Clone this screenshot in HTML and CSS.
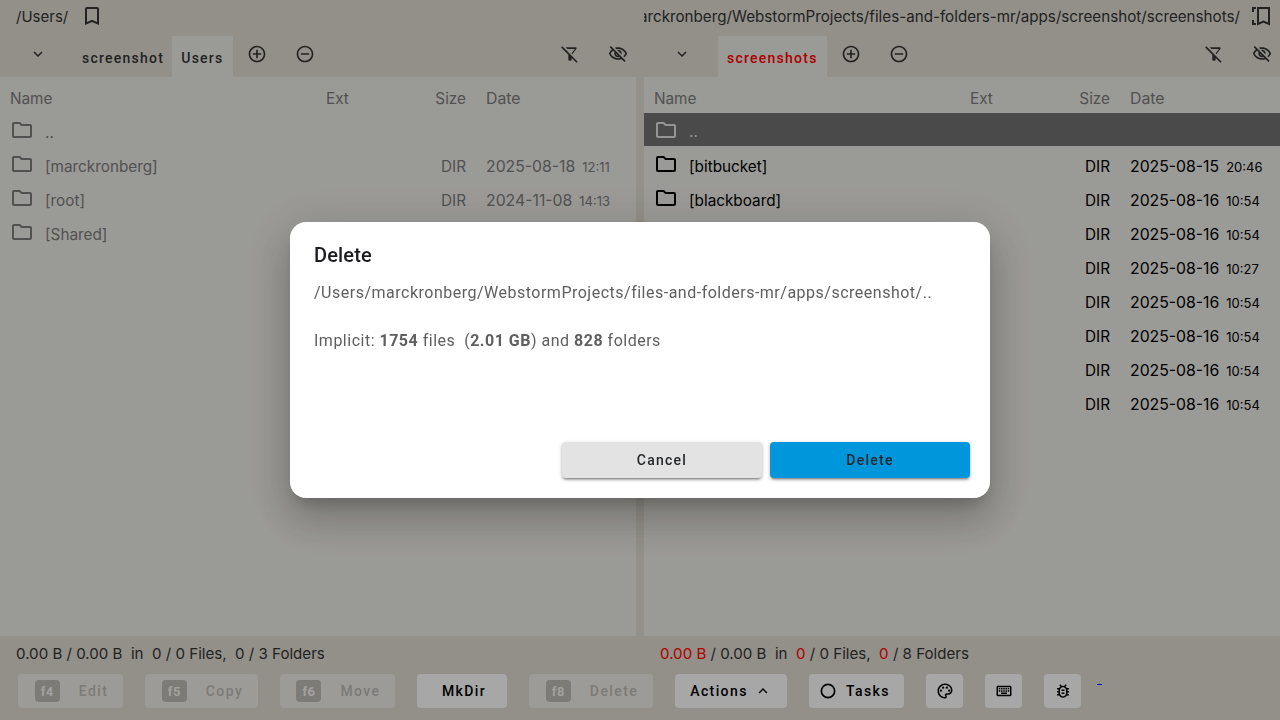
FILE: index.html
```html
<!DOCTYPE html>
<html lang="en">
<head>
  <meta charset="UTF-8" />
  <title>Files and Folders</title>
  <link rel="stylesheet" href="styles.css">
</head>
<body>
  <div class="app">
    <div class="panes">
      <section class="pane">
        <div class="path-bar">
          <span class="path">/Users/</span>
          <button class="icon-btn bookmark"><svg viewBox="0 0 24 24" width="24" height="24"><path d="M17 3H7c-1.1 0-1.99.9-1.99 2L5 21l7-3 7 3V5c0-1.1-.9-2-2-2zm0 15l-5-2.18L7 18V5h10v13z"/></svg></button>
        </div>
        <div class="tab-bar">
          <span class="chevron"><svg viewBox="0 0 24 24" width="18" height="18"><path d="M16.59 8.59 12 13.17 7.41 8.59 6 10l6 6 6-6z"/></svg></span>
          <span class="tab">screenshot</span>
          <span class="tab tab-on">Users</span>
          <span class="tab-action first"><svg viewBox="0 0 24 24" width="20" height="20"><path d="M13 7h-2v4H7v2h4v4h2v-4h4v-2h-4V7zm-1-5C6.48 2 2 6.48 2 12s4.48 10 10 10 10-4.48 10-10S17.52 2 12 2zm0 18c-4.41 0-8-3.59-8-8s3.59-8 8-8 8 3.59 8 8-3.59 8-8 8z"/></svg></span>
          <span class="tab-action"><svg viewBox="0 0 24 24" width="20" height="20"><path d="M7 11v2h10v-2H7zm5-9C6.48 2 2 6.48 2 12s4.48 10 10 10 10-4.48 10-10S17.52 2 12 2zm0 18c-4.41 0-8-3.59-8-8s3.59-8 8-8 8 3.59 8 8-3.59 8-8 8z"/></svg></span>
          <span class="tab-tools">
            <svg viewBox="0 0 24 24" width="20" height="20"><path d="M19.79 5.61C20.3 4.95 19.83 4 19 4H6.83l2 2h9.13l-4.15 5.3 1 1zM2.81 2.81 1.39 4.22 10 13v6c0 .55.45 1 1 1h2c.55 0 1-.45 1-1v-2.17l5.78 5.78 1.41-1.41L2.81 2.81z"/></svg>
            <svg viewBox="0 0 24 24" width="20" height="20"><path d="M12 6c3.79 0 7.17 2.13 8.82 5.5-.59 1.22-1.42 2.27-2.41 3.12l1.41 1.41c1.39-1.23 2.49-2.77 3.18-4.53C21.27 7.11 17 4 12 4c-1.27 0-2.49.2-3.64.57l1.65 1.65C10.66 6.09 11.32 6 12 6zm-1.07 1.14L13 9.21c.57.25 1.03.71 1.28 1.28l2.07 2.07c.08-.34.14-.7.14-1.07C16.5 9.01 14.48 7 12 7c-.37 0-.72.05-1.07.14zM2.01 3.87l2.68 2.68C3.06 7.83 1.77 9.53 1 11.5 2.73 15.89 7 19 12 19c1.52 0 2.98-.29 4.32-.82l3.42 3.42 1.41-1.41L3.42 2.45 2.01 3.87zm7.5 7.5l2.61 2.61c-.04.01-.08.02-.12.02-1.38 0-2.5-1.12-2.5-2.5 0-.05.01-.08.01-.13zm-3.4-3.4l1.75 1.75c-.23.55-.36 1.15-.36 1.78 0 2.48 2.02 4.5 4.5 4.5.63 0 1.23-.13 1.77-.36l.98.98c-.88.24-1.8.38-2.75.38-3.79 0-7.17-2.13-8.82-5.5.7-1.43 1.72-2.61 2.93-3.53z"/></svg>
          </span>
        </div>
        <div class="list list-dim">
          <div class="row head"><span>Name</span><span>Ext</span><span class="size">Size</span><span class="date">Date</span></div>
          <div class="row"><span class="name"><svg class="folder" viewBox="0 0 24 24" width="24" height="24"><path d="M9.17 6l2 2H20v10H4V6h5.17M10 4H4c-1.1 0-1.99.9-1.99 2L2 18c0 1.1.9 2 2 2h16c1.1 0 2-.9 2-2V8c0-1.1-.9-2-2-2h-8l-2-2z"/></svg>..</span></div>
          <div class="row"><span class="name"><svg class="folder" viewBox="0 0 24 24" width="24" height="24"><path d="M9.17 6l2 2H20v10H4V6h5.17M10 4H4c-1.1 0-1.99.9-1.99 2L2 18c0 1.1.9 2 2 2h16c1.1 0 2-.9 2-2V8c0-1.1-.9-2-2-2h-8l-2-2z"/></svg>[marckronberg]</span><span></span><span class="size">DIR</span><span class="date">2025-08-18<small>12:11</small></span></div>
          <div class="row"><span class="name"><svg class="folder" viewBox="0 0 24 24" width="24" height="24"><path d="M9.17 6l2 2H20v10H4V6h5.17M10 4H4c-1.1 0-1.99.9-1.99 2L2 18c0 1.1.9 2 2 2h16c1.1 0 2-.9 2-2V8c0-1.1-.9-2-2-2h-8l-2-2z"/></svg>[root]</span><span></span><span class="size">DIR</span><span class="date">2024-11-08<small>14:13</small></span></div>
          <div class="row"><span class="name"><svg class="folder" viewBox="0 0 24 24" width="24" height="24"><path d="M9.17 6l2 2H20v10H4V6h5.17M10 4H4c-1.1 0-1.99.9-1.99 2L2 18c0 1.1.9 2 2 2h16c1.1 0 2-.9 2-2V8c0-1.1-.9-2-2-2h-8l-2-2z"/></svg>[Shared]</span></div>
        </div>
        <div class="status">0.00 B / 0.00 B&nbsp; in&nbsp; 0 / 0 Files,&nbsp; 0 / 3 Folders</div>
      </section>

      <section class="pane">
        <div class="path-bar">
          <span class="path path-long"><span>/Users/marckronberg/WebstormProjects/files-and-folders-mr/apps/screenshot/screenshots/</span></span>
          <button class="icon-btn bookmark"><svg viewBox="0 0 24 24" width="24" height="24"><path class="bracket" d="M6 4H3v4M3 16v4h3M8 20V4h11v16l-5.5-2.5z"/></svg></button>
        </div>
        <div class="tab-bar">
          <span class="chevron"><svg viewBox="0 0 24 24" width="18" height="18"><path d="M16.59 8.59 12 13.17 7.41 8.59 6 10l6 6 6-6z"/></svg></span>
          <span class="tab tab-on tab-red">screenshots</span>
          <span class="tab-action first"><svg viewBox="0 0 24 24" width="20" height="20"><path d="M13 7h-2v4H7v2h4v4h2v-4h4v-2h-4V7zm-1-5C6.48 2 2 6.48 2 12s4.48 10 10 10 10-4.48 10-10S17.52 2 12 2zm0 18c-4.41 0-8-3.59-8-8s3.59-8 8-8 8 3.59 8 8-3.59 8-8 8z"/></svg></span>
          <span class="tab-action"><svg viewBox="0 0 24 24" width="20" height="20"><path d="M7 11v2h10v-2H7zm5-9C6.48 2 2 6.48 2 12s4.48 10 10 10 10-4.48 10-10S17.52 2 12 2zm0 18c-4.41 0-8-3.59-8-8s3.59-8 8-8 8 3.59 8 8-3.59 8-8 8z"/></svg></span>
          <span class="tab-tools">
            <svg viewBox="0 0 24 24" width="20" height="20"><path d="M19.79 5.61C20.3 4.95 19.83 4 19 4H6.83l2 2h9.13l-4.15 5.3 1 1zM2.81 2.81 1.39 4.22 10 13v6c0 .55.45 1 1 1h2c.55 0 1-.45 1-1v-2.17l5.78 5.78 1.41-1.41L2.81 2.81z"/></svg>
            <svg viewBox="0 0 24 24" width="20" height="20"><path d="M12 6c3.79 0 7.17 2.13 8.82 5.5-.59 1.22-1.42 2.27-2.41 3.12l1.41 1.41c1.39-1.23 2.49-2.77 3.18-4.53C21.27 7.11 17 4 12 4c-1.27 0-2.49.2-3.64.57l1.65 1.65C10.66 6.09 11.32 6 12 6zm-1.07 1.14L13 9.21c.57.25 1.03.71 1.28 1.28l2.07 2.07c.08-.34.14-.7.14-1.07C16.5 9.01 14.48 7 12 7c-.37 0-.72.05-1.07.14zM2.01 3.87l2.68 2.68C3.06 7.83 1.77 9.53 1 11.5 2.73 15.89 7 19 12 19c1.52 0 2.98-.29 4.32-.82l3.42 3.42 1.41-1.41L3.42 2.45 2.01 3.87zm7.5 7.5l2.61 2.61c-.04.01-.08.02-.12.02-1.38 0-2.5-1.12-2.5-2.5 0-.05.01-.08.01-.13zm-3.4-3.4l1.75 1.75c-.23.55-.36 1.15-.36 1.78 0 2.48 2.02 4.5 4.5 4.5.63 0 1.23-.13 1.77-.36l.98.98c-.88.24-1.8.38-2.75.38-3.79 0-7.17-2.13-8.82-5.5.7-1.43 1.72-2.61 2.93-3.53z"/></svg>
          </span>
        </div>
        <div class="list">
          <div class="row head"><span>Name</span><span>Ext</span><span class="size">Size</span><span class="date">Date</span></div>
          <div class="row row-cursor"><span class="name"><svg class="folder" viewBox="0 0 24 24" width="24" height="24"><path d="M9.17 6l2 2H20v10H4V6h5.17M10 4H4c-1.1 0-1.99.9-1.99 2L2 18c0 1.1.9 2 2 2h16c1.1 0 2-.9 2-2V8c0-1.1-.9-2-2-2h-8l-2-2z"/></svg>..</span></div>
          <div class="row"><span class="name"><svg class="folder" viewBox="0 0 24 24" width="24" height="24"><path d="M9.17 6l2 2H20v10H4V6h5.17M10 4H4c-1.1 0-1.99.9-1.99 2L2 18c0 1.1.9 2 2 2h16c1.1 0 2-.9 2-2V8c0-1.1-.9-2-2-2h-8l-2-2z"/></svg>[bitbucket]</span><span></span><span class="size">DIR</span><span class="date">2025-08-15<small>20:46</small></span></div>
          <div class="row"><span class="name"><svg class="folder" viewBox="0 0 24 24" width="24" height="24"><path d="M9.17 6l2 2H20v10H4V6h5.17M10 4H4c-1.1 0-1.99.9-1.99 2L2 18c0 1.1.9 2 2 2h16c1.1 0 2-.9 2-2V8c0-1.1-.9-2-2-2h-8l-2-2z"/></svg>[blackboard]</span><span></span><span class="size">DIR</span><span class="date">2025-08-16<small>10:54</small></span></div>
          <div class="row"><span class="name"></span><span></span><span class="size">DIR</span><span class="date">2025-08-16<small>10:54</small></span></div>
          <div class="row"><span class="name"></span><span></span><span class="size">DIR</span><span class="date">2025-08-16<small>10:27</small></span></div>
          <div class="row"><span class="name"></span><span></span><span class="size">DIR</span><span class="date">2025-08-16<small>10:54</small></span></div>
          <div class="row"><span class="name"></span><span></span><span class="size">DIR</span><span class="date">2025-08-16<small>10:54</small></span></div>
          <div class="row"><span class="name"></span><span></span><span class="size">DIR</span><span class="date">2025-08-16<small>10:54</small></span></div>
          <div class="row"><span class="name"></span><span></span><span class="size">DIR</span><span class="date">2025-08-16<small>10:54</small></span></div>
        </div>
        <div class="status"><em>0.00 B</em> / 0.00 B&nbsp; in&nbsp; <em>0</em> / 0 Files,&nbsp; <em>0</em> / 8 Folders</div>
      </section>
    </div>

    <div class="button-bar">
      <button class="btn off btn-edit"><kbd>f4</kbd>Edit</button>
      <button class="btn off btn-copy"><kbd>f5</kbd>Copy</button>
      <button class="btn off btn-move"><kbd>f6</kbd>Move</button>
      <button class="btn btn-mkdir">MkDir</button>
      <button class="btn off btn-delete"><kbd>f8</kbd>Delete</button>
      <button class="btn btn-actions">Actions<svg viewBox="0 0 24 24" width="18" height="18"><path d="M12 8l-6 6 1.41 1.41L12 10.83l4.59 4.58L18 14z"/></svg></button>
      <button class="btn btn-tasks"><svg viewBox="0 0 24 24" width="20" height="20"><circle cx="12" cy="12" r="8" fill="none" stroke="#000" stroke-width="2"/></svg>Tasks</button>
      <button class="btn btn-icon"><svg viewBox="0 0 24 24" width="18" height="18"><path d="M12 22C6.49 22 2 17.51 2 12S6.49 2 12 2s10 4.04 10 9c0 3.31-2.69 6-6 6h-1.77c-.28 0-.5.22-.5.5 0 .12.05.23.13.33.41.47.64 1.06.64 1.67 0 1.38-1.12 2.5-2.5 2.5zm0-18c-4.41 0-8 3.59-8 8s3.59 8 8 8c.28 0 .5-.22.5-.5 0-.16-.08-.28-.14-.35-.41-.46-.63-1.05-.63-1.65 0-1.38 1.12-2.5 2.5-2.5H16c2.21 0 4-1.79 4-4 0-3.86-3.59-7-8-7z"/><circle cx="6.5" cy="11.5" r="1.5"/><circle cx="9.5" cy="7.5" r="1.5"/><circle cx="14.5" cy="7.5" r="1.5"/><circle cx="17.5" cy="11.5" r="1.5"/></svg></button>
      <button class="btn btn-icon"><svg viewBox="0 0 24 24" width="18" height="18"><path d="M20 7v10H4V7h16m0-2H4c-1.1 0-1.99.9-1.99 2L2 17c0 1.1.9 2 2 2h16c1.1 0 2-.9 2-2V7c0-1.1-.9-2-2-2zm-9 3h2v2h-2zm0 3h2v2h-2zM8 8h2v2H8zm0 3h2v2H8zm-3 0h2v2H5zm0-3h2v2H5zm3 6h8v2H8zm6-3h2v2h-2zm0-3h2v2h-2zm3 3h2v2h-2zm0-3h2v2h-2z"/></svg></button>
      <button class="btn btn-icon"><svg viewBox="0 0 24 24" width="18" height="18"><path d="M20 8h-2.81c-.45-.78-1.07-1.45-1.82-1.96L17 4.41 15.59 3l-2.17 2.17C12.96 5.06 12.49 5 12 5c-.49 0-.96.06-1.41.17L8.41 3 7 4.41l1.62 1.63C7.88 6.55 7.26 7.22 6.81 8H4v2h2.09c-.05.33-.09.66-.09 1v1H4v2h2v1c0 .34.04.67.09 1H4v2h2.81c1.04 1.79 2.97 3 5.19 3s4.15-1.21 5.19-3H20v-2h-2.09c.05-.33.09-.66.09-1v-1h2v-2h-2v-1c0-.34-.04-.67-.09-1H20V8zm-4 4v3c0 .22-.03.47-.07.7l-.1.65-.37.65c-.72 1.24-2.04 2-3.46 2s-2.74-.77-3.46-2l-.37-.64-.1-.65C8.03 15.47 8 15.22 8 15v-4c0-.22.03-.47.07-.7l.1-.65.37-.65c.3-.52.72-.97 1.21-1.31l.57-.39.74-.18c.31-.08.63-.12.94-.12.32 0 .63.04.95.12l.68.16.61.42c.5.34.91.78 1.21 1.31l.38.65.1.65c.04.22.07.47.07.69v1zm-6 2h4v2h-4zm0-4h4v2h-4z"/></svg></button>
      <span class="blue-dash"></span>
    </div>
  </div>

  <div class="overlay">
    <div class="dialog">
      <h2>Delete</h2>
      <p>/Users/marckronberg/WebstormProjects/files-and-folders-mr/apps/screenshot/..</p>
      <p class="implicit">Implicit: <b>1754</b> files&nbsp; (<b>2.01 GB</b>) and <b>828</b> folders</p>
      <div class="dialog-actions">
        <button class="dlg-btn cancel">Cancel</button>
        <button class="dlg-btn confirm">Delete</button>
      </div>
    </div>
  </div>
</body>
</html>
```

FILE: styles.css
```css
* {
  box-sizing: border-box;
}
html, body {
  margin: 0;
  height: 100%;
  overflow: hidden;
}
body {
  font-family: Inter, "Liberation Sans", sans-serif;
  background: #d8d4ca;
  color: #333;
}
.app {
  height: 720px;
  display: flex;
  flex-direction: column;
}
.panes {
  flex: 1;
  display: grid;
  grid-template-columns: 636px 636px;
  column-gap: 8px;
}
.pane {
  display: flex;
  flex-direction: column;
  min-width: 0;
}
.path-bar {
  height: 36px;
  display: flex;
  align-items: center;
  font-size: 15px;
  padding: 0 0 4px 16px;
}
.path {
  white-space: nowrap;
  color: #333;
}
.path-long {
  flex: 1;
  min-width: 0;
  overflow: hidden;
  display: flex;
  justify-content: flex-end;
  font-size: 15.2px;
}
.icon-btn {
  border: 0;
  background: none;
  padding: 0;
  display: flex;
  margin-left: 12px;
  width: 24px;
  fill: #333;
}
.pane + .pane .icon-btn {
  margin-left: 10px;
  margin-right: 6px;
}
.pane + .pane .path-bar {
  padding-left: 0;
}
.bracket {
  fill: none;
  stroke: #333;
  stroke-width: 2;
}
.tab-bar {
  height: 41px;
  display: flex;
  align-items: stretch;
  fill: #333;
}
.chevron {
  width: 76px;
  display: flex;
  align-items: center;
  justify-content: center;
  padding-bottom: 6px;
  flex: none;
}
.pane + .pane .chevron {
  width: 74px;
  padding-left: 2px;
}
.tab {
  font-family: Roboto, sans-serif;
  font-weight: 500;
  font-size: 14px;
  letter-spacing: 1.25px;
  padding: 3px 9px 0;
  display: flex;
  align-items: center;
  color: #333;
}
.pane:first-child .tab:nth-child(2) {
  padding-left: 6px;
  padding-right: 8px;
}
.tab-on {
  background: #e4e3dd;
}
.tab-red {
  color: #f00;
}
.tab-action {
  width: 48px;
  display: flex;
  align-items: center;
  justify-content: center;
  padding-bottom: 5px;
}
.tab-tools {
  margin-left: auto;
  display: flex;
  gap: 28px;
  align-items: center;
  padding: 0 8px 5px 0;
}
.list {
  flex: 1;
  background: #e4e3dd;
}
.row {
  display: grid;
  grid-template-columns: 316px 90px 50px 1fr;
  padding: 4px 0 0 10px;
  height: 34px;
  align-items: center;
  font-size: 15.3px;
  color: #000;
}
.head {
  height: 36px;
  padding-top: 6px;
}
.list .head {
  color: #787878;
}
.row-cursor {
  height: 33px;
  margin-bottom: 1px;
  background: #6d6d6d;
  fill: #dcdcdc;
}
.row-cursor .name {
  color: #dcdcdc;
}
.row-cursor .folder {
  margin-top: -3px;
}
.name {
  display: flex;
  align-items: center;
  gap: 11px;
}
.folder {
  flex: none;
  margin-top: -5px;
}
.size {
  text-align: right;
}
.date {
  padding-left: 20px;
  white-space: nowrap;
  font-size: 15.8px;
}
.date small {
  font-size: 13px;
  margin-left: 7px;
}
.list-dim .row {
  color: #787878;
  fill: #787878;
}
.status {
  height: 36px;
  display: flex;
  align-items: center;
  padding: 0 0 2px 16px;
  font-size: 15.1px;
  white-space: pre;
  color: #333;
}
.status em {
  font-style: normal;
  color: #f00;
}
.button-bar {
  height: 48px;
  display: flex;
  align-items: flex-start;
  padding: 2px 0 0 18px;
}
.btn {
  height: 34px;
  border: 0;
  border-radius: 4px;
  background: #f7f7f7;
  font-family: Roboto, sans-serif;
  font-weight: 500;
  font-size: 14px;
  letter-spacing: 1.4px;
  color: #000;
  display: flex;
  align-items: center;
  justify-content: center;
  padding: 0;
  margin-right: 22px;
}
.btn.off {
  background: #e6e5e0;
  color: #b7b5ae;
  padding-left: 2px;
}
.btn kbd {
  font-family: Roboto, sans-serif;
  font-weight: 700;
  font-size: 13px;
  background: #b7b5ae;
  color: #eeeeea;
  width: 25px;
  height: 22px;
  border-radius: 4px;
  margin-right: 19px;
  display: flex;
  align-items: center;
  justify-content: center;
  letter-spacing: 0.5px;
}
.btn-edit { width: 105px; }
.btn-copy { width: 113px; }
.btn-move { width: 115px; }
.btn-mkdir { width: 90px; padding-left: 4px; }
.btn-delete { width: 124px; }
.btn-actions { width: 112px; gap: 6px; }
.btn-tasks { width: 95px; gap: 8px; padding-right: 5px; }
.btn-icon { width: 37px; }
.btn-icon:last-of-type { margin-right: 16px; }
.blue-dash {
  width: 5px;
  height: 1px;
  background: #0000ee;
  margin-top: 10px;
}
.overlay {
  position: fixed;
  inset: 0;
  background: rgba(0, 0, 0, 0.32);
  display: flex;
  align-items: center;
  justify-content: center;
}
.dialog {
  width: 700px;
  height: 276px;
  background: #fff;
  border-radius: 16px;
  padding: 20px 20px 20px 24px;
  display: flex;
  flex-direction: column;
  box-shadow: 0 11px 15px -7px rgba(0,0,0,.2), 0 24px 38px 3px rgba(0,0,0,.14), 0 9px 46px 8px rgba(0,0,0,.12);
  font-family: Roboto, sans-serif;
}
.dialog h2 {
  margin: 0 0 13px;
  font-size: 20px;
  font-weight: 500;
  line-height: 26px;
  letter-spacing: 0.15px;
  color: #1c1b1f;
}
.dialog p {
  margin: 0;
  font-size: 16px;
  line-height: 24px;
  letter-spacing: 0.5px;
  color: #5f5f5f;
}
.dialog .implicit {
  margin-top: 24px;
}
.dialog b {
  font-weight: 700;
}
.dialog-actions {
  margin-top: auto;
  display: flex;
  justify-content: flex-end;
  gap: 8px;
}
.dlg-btn {
  width: 200px;
  height: 36px;
  border: 0;
  border-radius: 4px;
  font-family: Roboto, sans-serif;
  font-weight: 500;
  font-size: 14px;
  letter-spacing: 1.25px;
  color: #26272b;
  box-shadow: 0 3px 2px -2px rgba(0,0,0,.3), 0 2px 3px 0 rgba(0,0,0,.2), 0 1px 5px 0 rgba(0,0,0,.14);
}
.cancel {
  background: #e3e3e3;
}
.confirm {
  background: #0096dc;
}
```
